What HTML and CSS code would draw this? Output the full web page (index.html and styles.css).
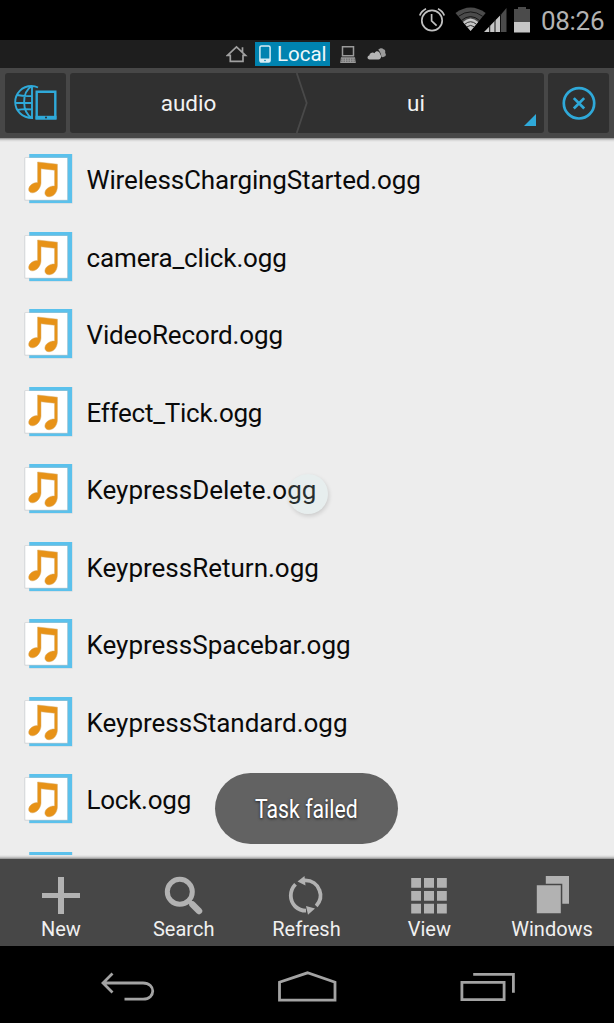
FILE: index.html
```
<!DOCTYPE html>
<html lang="en">
<head>
    <meta charset="UTF-8">
    <meta name="viewport" content="width=device-width, initial-scale=1.0">
    <title>File Explorer</title>
    <link rel="stylesheet" href="styles.css">
</head>
<body>
    <!-- shared file icon -->
    <svg class="defs" width="0" height="0">
        <symbol id="music" viewBox="0 0 50 52">
            <rect x="5.3" y="1" width="43.2" height="49.5" fill="#c9d4d9"/>
            <rect x="5.3" y="1" width="42.7" height="49" fill="#5bc1ec"/>
            <rect x="0.6" y="4.6" width="43" height="42.8" fill="#bfc4c7"/>
            <rect x="1.2" y="5" width="42" height="41.8" fill="#fff"/>
            <path d="M13.6 9l19.8 2.2v22.6c0 5-3.3 9.6-7.600 9.900-3.400.3-5.600-2-4.700-5 .9-3.300 5.100-5.900 9.500-5.700V17.200l-13.600-1.500v14c0 4-3 8.900-7 9.900-3 .8-5.600-.6-5.300-3.500.4-3.500 4.500-6.800 8.900-6.500z" fill="#e79217" stroke="#d9a860" stroke-width=".5"/>
        </symbol>
    </svg>

    <div class="screen">
        <div class="status-bar">
            <svg class="icon-alarm" width="28" height="28" viewBox="0 0 28 28" fill="none" stroke="#c0c0c0">
                <circle cx="14" cy="14.500" r="10.200" stroke-width="1.700"/>
                <path d="M13.600 8v7l5 4.600" stroke-width="1.700"/>
                <path d="M1.800 9.500Q3.300 5 8 2.700M26.200 9.500Q24.700 5 20 2.700" stroke-width="1.800"/>
            </svg>
            <svg class="icon-signal" width="54" height="28" viewBox="0 0 54 28">
                <path d="M.5 7Q15.500-4 30.700 7L15.600 25z" fill="#4b4b4b"/>
                <path d="M8 16Q15.500 9 23.200 16L15.600 25z" fill="#c6c6c6"/>
                <path d="M3.500 10.300Q15.500 1.500 27.700 10.300M6 14.800Q15.500 6.300 25 14.800" stroke="#111" stroke-width=".9" fill="none"/>
                <path d="M9.800 18.200Q15.600 13.300 21.400 18.200M12 20.800Q15.600 18 19.200 20.800" stroke="#222" stroke-width=".9" fill="none"/>
                <path d="M46 8.500L51.500 2v24H46z" fill="#4b4b4b"/>
                <path d="M29 26L46 8.500V26z" fill="#c6c6c6"/>
                <path d="M34.700 19v7M40 13v13M45.500 8v18" stroke="#111" stroke-width="1"/>
            </svg>
            <svg class="icon-battery" width="18" height="28" viewBox="0 0 18 28">
                <path d="M1 3h4V1h8v2h4v14H1z" fill="#4b4b4b"/>
                <path d="M1 16h16v10.500H1z" fill="#c6c6c6"/>
            </svg>
            <span class="clock">08:26</span>
        </div>

        <div class="tabs">
            <svg class="tab-home" width="22" height="20" viewBox="0 0 22 20" fill="none" stroke="#a0a0a0" stroke-width="1.700">
                <path d="M1.500 11.300L10.500 3 19.500 11.300H17V17.300H4.300V11.300zM16.500 8V3.300"/>
            </svg>
            <div class="tab-active">
                <svg width="12" height="18" viewBox="0 0 12 18">
                    <rect x=".9" y=".9" width="10.200" height="16.200" rx="1.500" fill="none" stroke="#d7edf5" stroke-width="1.500"/>
                    <path d="M1 13.500h10V17H1z" fill="#d7edf5"/>
                    <circle cx="6" cy="15.500" r=".8" fill="#0083b0"/>
                </svg>
                <span>Local</span>
            </div>
            <svg class="tab-lan" width="16" height="19" viewBox="0 0 16 19">
                <path d="M2.500 1.700h11v9h-11z" fill="none" stroke="#9a9a9a" stroke-width="1.500"/>
                <path d="M1 12.300h14l.8 5.700H.2z" fill="#9a9a9a"/>
                <path d="M1 14.200h14M1 16.200h14" stroke="#444" stroke-width=".6" stroke-dasharray="1.500 1"/>
            </svg>
            <svg class="tab-cloud" width="20" height="14" viewBox="0 0 20 14">
                <path d="M2.500 12.500C0 12.500-.2 9 2.300 8.400 3 5.500 6 5 7.500 6.200 9 3 12.500 4 13 6.700c2 2.500 1 5.800-1.500 5.800z" fill="#b5b5b5"/>
                <path d="M11.300 2.800c1.500-2 4.200-2 5.200-.5 2 .5 2 2.500 1.600 3.600 1.500 1.500.7 3.600-.9 3.600-1 1-2.200.7-2.900 0-.2-3-1.300-4.700-3-6.700z" fill="#9a9a9a"/>
            </svg>
        </div>

        <div class="path-bar">
            <div class="path-btn">
                <svg class="net" width="44" height="38" viewBox="0 0 44 38" fill="none" stroke="#2fa9d9">
                    <path d="M25 4.500Q22 3 18.500 3C9 3 2.200 10.500 2.200 19S9 35.300 20 35M19 3v32M19 3C8.500 9 8.500 29 19 35M4 12Q11 13.500 19.500 13M2.200 20h17.300M4 27Q11 25.500 19.500 26.500" stroke-width="1.900"/>
                    <path d="M23.700 8.800h18.600v26.500H23.700z" stroke-width="2.400"/>
                    <path d="M22.500 32.800h21v3.700h-21z" fill="#2fa9d9" stroke="none"/>
                    <circle cx="33" cy="34.500" r="1" fill="#303030" stroke="none"/>
                </svg>
            </div>
            <div class="crumbs">
                <div class="crumb crumb-parent">audio</div>
                <svg class="crumb-sep" width="12" height="60" viewBox="0 0 12 60">
                    <path d="M.7 0L10.700 30 .7 60" fill="none" stroke="#494949" stroke-width="1.800"/>
                </svg>
                <div class="crumb crumb-current">ui</div>
                <span class="corner"></span>
            </div>
            <div class="path-btn">
                <svg width="34" height="34" viewBox="0 0 34 34" fill="none" stroke="#2fa9d9">
                    <circle cx="17" cy="17.300" r="15.200" stroke-width="2.700"/>
                    <path d="M11.800 12.100l10.400 10.400M22.200 12.100L11.800 22.500" stroke-width="2.700"/>
                </svg>
            </div>
        </div>

        <div class="content">
            <div class="file-list">
                <div class="file"><svg><use href="#music"/></svg><span>WirelessChargingStarted.ogg</span></div>
                <div class="file"><svg><use href="#music"/></svg><span>camera_click.ogg</span></div>
                <div class="file"><svg><use href="#music"/></svg><span>VideoRecord.ogg</span></div>
                <div class="file tight"><svg><use href="#music"/></svg><span>Effect_Tick.ogg</span></div>
                <div class="file loose"><svg><use href="#music"/></svg><span>KeypressDelete.ogg</span></div>
                <div class="file loose"><svg><use href="#music"/></svg><span>KeypressReturn.ogg</span></div>
                <div class="file loose"><svg><use href="#music"/></svg><span>KeypressSpacebar.ogg</span></div>
                <div class="file loose"><svg><use href="#music"/></svg><span>KeypressStandard.ogg</span></div>
                <div class="file tight"><svg><use href="#music"/></svg><span>Lock.ogg</span></div>
                <div class="file"><svg><use href="#music"/></svg></div>
            </div>
            <div class="touch"></div>
            <div class="toast"><span>Task failed</span></div>
        </div>

        <div class="toolbar">
            <div class="tool">
                <svg width="40" height="40" viewBox="0 0 40 40" fill="#b2b2b2"><path d="M17 1h6v16h16v5H23v16h-6V22H1v-5h16z"/></svg>
                <span>New</span>
            </div>
            <div class="tool">
                <svg width="40" height="40" viewBox="0 0 40 40" fill="none" stroke="#b2b2b2">
                    <circle cx="15.800" cy="15.800" r="12.500" stroke-width="5"/>
                    <path d="M24.500 24.500l4 4" stroke-width="4"/>
                    <path d="M28.500 28.500l6.500 6.500" stroke-width="6.500" stroke-linecap="round"/>
                </svg>
                <span>Search</span>
            </div>
            <div class="tool">
                <svg width="40" height="40" viewBox="0 0 40 40">
                    <path d="M9.500 8.300C3 15 3.500 25 9.300 30.500 12.500 33.500 15.500 34.700 20 34.700M18 4.500c8-.5 13.500 4 15.500 9.800 2.500 6.500.5 11.500-3.300 15.700" fill="none" stroke="#b2b2b2" stroke-width="3.800"/>
                    <path d="M11.500 5.500L18.500 0l1 9.500zM29 32.500l-9-2.500 2 8.700z" fill="#b2b2b2"/>
                </svg>
                <span>Refresh</span>
            </div>
            <div class="tool">
                <svg width="40" height="40" viewBox="0 0 40 40" fill="#b2b2b2">
                    <path d="M2.200 2h9.800v9.800H2.200zM15 2h10v9.800H15zM28 2h9.800v9.800H28zM2.200 15h9.800v9.800H2.200zM15 15h10v9.800H15zM28 15h9.800v9.800H28zM2.200 27.700h9.800v9.800H2.200zM15 27.700h10v9.800H15zM28 27.700h9.800v9.800H28z"/>
                </svg>
                <span>View</span>
            </div>
            <div class="tool">
                <svg width="40" height="40" viewBox="0 0 40 40" fill="#b2b2b2">
                    <path d="M13.800 0H37v27.700h-6.700V7.700H13.800zM4.800 9.300h24V37.300h-24z"/>
                </svg>
                <span>Windows</span>
            </div>
        </div>

        <div class="nav-bar">
            <svg width="56" height="32" viewBox="0 0 56 32" fill="none" stroke="#a3a3a3" stroke-width="2.800">
                <path d="M12.500 2.500L3 12l9.500 9.500M3.500 12H43c13 0 13 16.200 0 16.200H24.500"/>
            </svg>
            <svg width="60" height="34" viewBox="0 0 60 34" fill="none" stroke="#a3a3a3" stroke-width="2.800">
                <path d="M1.500 30.200V12.200L29.500 2.800l27.500 9.400v18z"/>
            </svg>
            <svg width="56" height="32" viewBox="0 0 56 32" fill="none" stroke="#a3a3a3" stroke-width="2.800">
                <path d="M1.900 11.300h42.200v17.300H1.900zM13.200 3.300h40.200v18.500"/>
            </svg>
        </div>
    </div>
</body>
</html>
```
FILE: styles.css
```
body {
    margin: 0;
    background: #000;
    font-family: Roboto, "Noto Sans", sans-serif;
}
svg {
    display: block;
    flex: none;
}
.defs {
    position: absolute;
}
.screen {
    width: 614px;
    height: 1023px;
    display: flex;
    flex-direction: column;
    overflow: hidden;
}

/* status bar */
.status-bar {
    height: 40px;
    display: flex;
    align-items: center;
    justify-content: flex-end;
    padding-right: 9px;
    box-sizing: border-box;
    background: #000;
}
.icon-signal {
    margin-left: 9px;
}
.icon-battery {
    margin-left: 4px;
}
.clock {
    width: 64px;
    margin-left: 10px;
    padding-top: 2px;
    font-size: 26px;
    color: #b2b2b2;
    letter-spacing: -0.300px;
}

/* tabs */
.tabs {
    height: 28px;
    display: flex;
    align-items: center;
    padding-left: 226px;
    background: #1e1e1e;
}
.tab-active {
    width: 75px;
    height: 24px;
    margin-left: 7px;
    padding-left: 4px;
    box-sizing: border-box;
    display: flex;
    align-items: center;
    gap: 6px;
    background: #0083b0;
    color: #eef8fb;
    font-size: 20.500px;
    line-height: 24px;
}
.tab-lan {
    margin-left: 10px;
}
.tab-cloud {
    margin-left: 11px;
}

/* path bar */
.path-bar {
    height: 70px;
    padding: 5px;
    box-sizing: border-box;
    display: flex;
    gap: 4px;
    background: #474747;
}
.path-btn {
    width: 61px;
    height: 60px;
    display: flex;
    align-items: center;
    justify-content: center;
    background: #303030;
    border-radius: 3px;
}
.net {
    margin: 0 2px 2px 0;
}
.crumbs {
    position: relative;
    flex: 1;
    height: 60px;
    display: flex;
    background: #303030;
    border-radius: 3px;
}
.crumb {
    color: #f2f2f2;
    font-size: 22.500px;
    line-height: 61px;
    text-align: center;
}
.crumb-parent {
    width: 226px;
    padding-left: 11px;
    box-sizing: border-box;
}
.crumb-current {
    width: 216px;
}
.corner {
    position: absolute;
    right: 8px;
    bottom: 7px;
    border-left: 12px solid transparent;
    border-bottom: 12px solid #2fa9d9;
}

/* files */
.content {
    position: relative;
    height: 721px;
    padding-bottom: 4px;
    box-sizing: border-box;
    background: linear-gradient(#8a8a8a, #d5d5d5 2px, #ededed 4px, #ededed 717px, #d0d0d0 719px, #8c8c8c 721px);
}
.file-list {
    height: 717px;
    padding-top: 2.500px;
    box-sizing: border-box;
    overflow: hidden;
}
.file {
    height: 77.500px;
    padding-left: 24px;
    display: flex;
    align-items: center;
    color: #0a0a0a;
    font-size: 26px;
    line-height: 30px;
    letter-spacing: -0.140px;
}
.file.loose {
    letter-spacing: 0;
}
.file.tight {
    letter-spacing: -0.250px;
}
.file svg {
    width: 50px;
    height: 52px;
    margin-right: 12.500px;
}
.file span {
    padding-top: 1.500px;
}
.touch {
    position: absolute;
    left: 288px;
    top: 336px;
    width: 40px;
    height: 40px;
    border-radius: 50%;
    background: rgba(200, 240, 240, 0.160);
    box-shadow: 1px 2px 4px rgba(0, 0, 0, 0.140);
}
.toast {
    position: absolute;
    left: 215px;
    top: 635px;
    width: 183px;
    height: 71px;
    border-radius: 36px;
    background: #626262;
    color: #fff;
    font-size: 25px;
    line-height: 74px;
    text-align: center;
    text-shadow: 0 1px 3px rgba(0, 0, 0, 0.700);
}
.toast span {
    display: inline-block;
    transform: scaleX(0.850);
}

/* bottom toolbar */
.toolbar {
    height: 87px;
    padding-top: 17px;
    box-sizing: border-box;
    display: flex;
    background: #474747;
}
.tool {
    flex: 1;
    display: flex;
    flex-direction: column;
    align-items: center;
    padding-right: 1px;
    color: #f0f0f0;
    font-size: 20px;
    line-height: 26px;
}

/* system navigation */
.nav-bar {
    height: 77px;
    padding: 5px 98px 0 100px;
    box-sizing: border-box;
    display: flex;
    align-items: center;
    justify-content: space-between;
    background: #000;
}
```
